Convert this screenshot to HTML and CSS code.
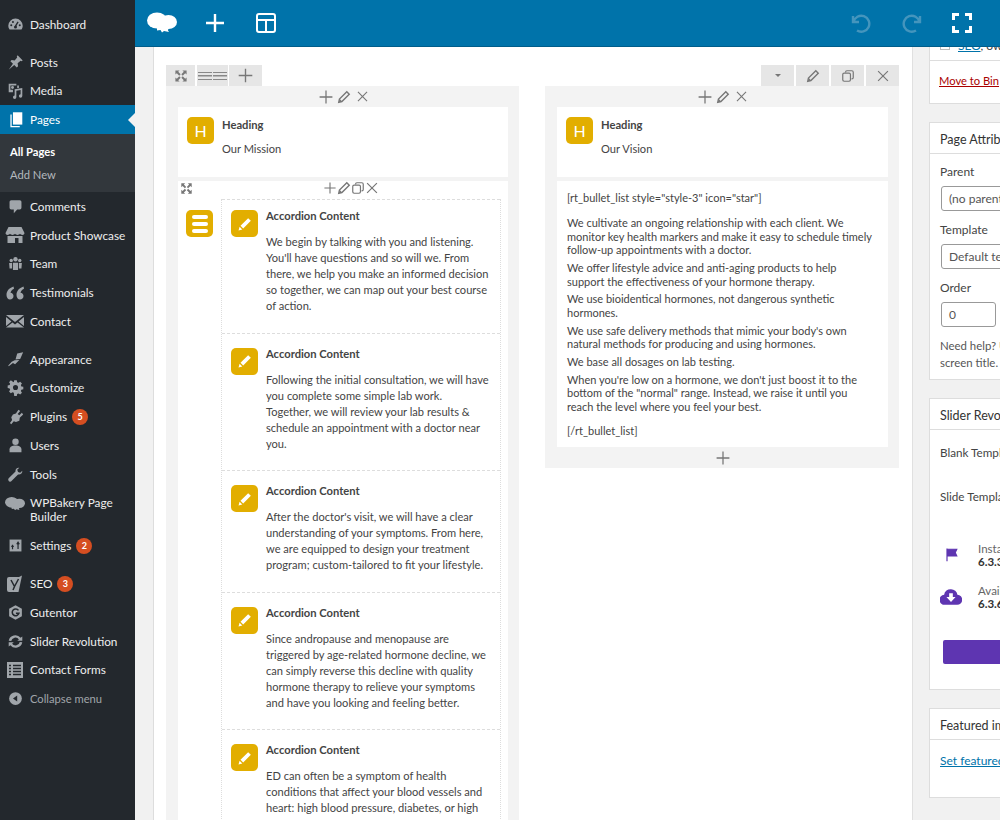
FILE: index.html
```html
<!DOCTYPE html>
<html lang="en">
<head>
    <meta charset="UTF-8">
    <title>Edit Page</title>
    <link rel="stylesheet" href="styles.css">
</head>
<body>
    <svg class="sprite" xmlns="http://www.w3.org/2000/svg">
        <symbol id="i-plus" viewBox="0 0 20 20"><path d="M10 2v16M2 10h16" fill="none" stroke="currentColor" stroke-width="1.6"/></symbol>
        <symbol id="i-x" viewBox="0 0 20 20"><path d="M3 3l14 14M17 3L3 17" fill="none" stroke="currentColor" stroke-width="1.7"/></symbol>
        <symbol id="i-pencil" viewBox="0 0 20 20"><path d="M14 2.500l3.500 3.500L7 16.500l-4.500 1 1-4.500z" fill="none" stroke="currentColor" stroke-width="2"/><path d="M3 17l1-4 3 3z" fill="currentColor"/></symbol>
        <symbol id="i-copy" viewBox="0 0 20 20"><rect x="2.500" y="6" width="11" height="11.500" rx="2" fill="none" stroke="currentColor" stroke-width="1.700"/><path d="M6.500 5V4.500a2 2 0 0 1 2-2h7a2 2 0 0 1 2 2V12a2 2 0 0 1-2 2H15" fill="none" stroke="currentColor" stroke-width="1.700"/></symbol>
        <symbol id="i-expand" viewBox="0 0 20 20"><path d="M2 2h6L6 4l3.500 3.500-2 2L4 6 2 8zM18 2v6l-2-2-3.500 3.500-2-2L14 4l-2-2zM2 18v-6l2 2 3.500-3.500 2 2L6 16l2 2zM18 18h-6l2-2-3.500-3.500 2-2L16 14l2-2z" fill="currentColor"/></symbol>
        <symbol id="i-edit" viewBox="0 0 20 20"><path d="M13.500 3.500l3 3-8.500 8.500-3-3zM4 13l3 3-4.200 1.200z" fill="currentColor"/></symbol>
        <symbol id="i-cloud" viewBox="0 0 30 22"><ellipse cx="10" cy="8.500" rx="10" ry="8" fill="currentColor"/><ellipse cx="21.500" cy="10" rx="8.500" ry="7" fill="currentColor"/><path d="M10 14h12l-1 4.500 1 1.500-5-1-2 1.500-1.500-2.500-3.500.5z" fill="currentColor"/></symbol>
    </svg>

    <nav class="sidebar">
        <ul class="menu">
            <li class="menu-item"><svg class="menu-icon" viewBox="0 0 20 20"><path d="M10 3a8.500 8.500 0 0 0-8.500 8.500c0 1.800.5 3.300 1.500 4.500h14c1-1.200 1.500-2.700 1.500-4.500A8.500 8.500 0 0 0 10 3z" fill="currentColor"/><path d="M10 12l3-5" stroke="#23282d" stroke-width="1.600"/><circle cx="5" cy="11" r="1.200" fill="#23282d"/><circle cx="7" cy="7" r="1.200" fill="#23282d"/><circle cx="15" cy="11" r="1.200" fill="#23282d"/><circle cx="10" cy="13" r="1.800" fill="#23282d"/></svg>Dashboard</li>
            <li class="menu-sep"></li>
            <li class="menu-item"><svg class="menu-icon" viewBox="0 0 20 20"><path d="M12.500 1.500l6 6-1.500 1-1-.5-3.500 3 .5 3.500-1.500 1.500-3-3L2 18.500l5-7-3-3L5.500 7l3.500.5 3-3.500-.5-1z" fill="currentColor"/></svg>Posts</li>
            <li class="menu-item"><svg class="menu-icon" viewBox="0 0 20 20"><path d="M2 2h9v2h3v3h-2V4H4v5h3v3H2z" fill="currentColor"/><circle cx="6.500" cy="6.500" r="1.700" fill="currentColor"/><path d="M9 8.500l9-1.500v9.500a2 2 0 1 1-2-2V9.500l-5 .8V18a2 2 0 1 1-2-2z" fill="currentColor"/></svg>Media</li>
            <li class="menu-item is-current"><svg class="menu-icon" viewBox="0 0 20 20"><path d="M7 1.500h11v14.500H7z" fill="currentColor"/><path d="M5.500 4H4v15h11v-1.500H5.500z" fill="currentColor"/></svg>Pages</li>
            <li class="submenu">
                <div class="submenu-item is-active">All Pages</div>
                <div class="submenu-item">Add New</div>
            </li>
            <li class="menu-item"><svg class="menu-icon" viewBox="0 0 20 20"><path d="M5 2.500h10a2 2 0 0 1 2 2v7a2 2 0 0 1-2 2h-3l-4 4.500v-4.500H5a2 2 0 0 1-2-2v-7a2 2 0 0 1 2-2z" fill="currentColor"/></svg>Comments</li>
            <li class="menu-item"><svg class="menu-icon wide" viewBox="0 0 20 20"><path d="M3.500 2h13L19.500 8c0 1.300-1 2-2.200 2-.9 0-1.800-.5-2.300-1.200-.5.7-1.500 1.200-2.500 1.200s-2-.5-2.500-1.200C9.500 9.500 8.500 10 7.500 10S5.500 9.500 5 8.800C4.500 9.500 3.600 10 2.700 10 1.500 10 .5 9.300.5 8z" fill="currentColor"/><path d="M2.500 11h15v7h-4v-5h-3.500v5H2.500z" fill="currentColor"/></svg>Product Showcase</li>
            <li class="menu-item"><svg class="menu-icon" viewBox="0 0 20 20"><circle cx="10" cy="5" r="2.600" fill="currentColor"/><circle cx="5" cy="6.500" r="2" fill="currentColor"/><circle cx="15" cy="6.500" r="2" fill="currentColor"/><path d="M7 9h6v8.500H7zM2.500 9.500h3.500v6.500H3zM14 9.500h3.500L17 16h-3z" fill="currentColor"/></svg>Team</li>
            <li class="menu-item"><svg class="menu-icon wide" viewBox="0 0 20 20"><path d="M8.500 3.500C4 5 1.500 8 1.500 12c0 2.500 1.500 4.500 3.500 4.500s3.500-1.500 3.500-3.500-1.300-3.300-3-3.300c.3-1.500 1.500-3 3.500-4zM18.500 3.500C14 5 11.500 8 11.500 12c0 2.500 1.500 4.500 3.500 4.500s3.500-1.500 3.500-3.500-1.300-3.300-3-3.300c.3-1.500 1.500-3 3.500-4z" fill="currentColor"/></svg>Testimonials</li>
            <li class="menu-item"><svg class="menu-icon wide" viewBox="0 0 20 20"><path d="M1 4h18L10 11zM1 6l5.500 4.500L1 15zM19 6v9l-5.500-4.500zM7.500 11.500L10 13.500l2.500-2 6.500 5H1z" fill="currentColor"/></svg>Contact</li>
            <li class="menu-sep"></li>
            <li class="menu-item"><svg class="menu-icon" viewBox="0 0 20 20"><path d="M12 3l7-1.500-3.500 8L10 10zM9 11l5.500-.5-5 5-2.500-1.500-5 4L1.500 17l4-4.500z" fill="currentColor"/></svg>Appearance</li>
            <li class="menu-item"><svg class="menu-icon" viewBox="0 0 20 20"><path d="M8.500 1.500h3l.5 2.300 1.500.6 2-1.300 2.100 2.100-1.300 2 .6 1.500 2.300.5v3l-2.300.5-.6 1.500 1.300 2-2.100 2.100-2-1.300-1.500.6-.5 2.300h-3L8 16.100l-1.500-.6-2 1.300-2.100-2.100 1.300-2-.6-1.500-2.300-.5v-3l2.300-.5.6-1.500-1.300-2 2.100-2.100 2 1.300L8 3.800zM10 7a3 3 0 1 0 0 6 3 3 0 0 0 0-6z" fill="currentColor"/></svg>Customize</li>
            <li class="menu-item"><svg class="menu-icon" viewBox="0 0 20 20"><path d="M13.500 2l2 1.500-3 3.500 2 1.500 3-3 1.500 2-4 4-.5 3.500-4 1.500-2.500-1-3 3.500-1.500-1.500 2.500-3.500-1-3 2-3.500 3.500-1z" fill="currentColor"/></svg>Plugins <span class="badge">5</span></li>
            <li class="menu-item"><svg class="menu-icon" viewBox="0 0 20 20"><circle cx="10" cy="5.500" r="3.800" fill="currentColor"/><path d="M10 10c-4 0-7 1.500-7 4.500V18h14v-3.500C17 11.500 14 10 10 10z" fill="currentColor"/></svg>Users</li>
            <li class="menu-item"><svg class="menu-icon" viewBox="0 0 20 20"><path d="M18 5.500c.3 2.500-2 5-5 4.500l-8 8c-1 1-2.500 0-3-.5-.5-.5-1-2 0-3l8-8c-.5-3 2-5 4.500-4.500l-2.500 2.500 1 2.500 2.500.8z" fill="currentColor"/></svg>Tools</li>
            <li class="menu-item is-double"><svg class="menu-icon wide" viewBox="0 0 30 22"><use href="#i-cloud"/></svg><span>WPBakery Page<br>Builder</span></li>
            <li class="menu-item"><svg class="menu-icon" viewBox="0 0 20 20"><path d="M3 3h14v14H3z" fill="currentColor"/><path d="M6.500 9v5.500M5 11h3M13 6v8M11.500 8.500L13 6l1.500 2.500" stroke="#23282d" stroke-width="1.400" fill="none"/></svg>Settings <span class="badge">2</span></li>
            <li class="menu-sep"></li>
            <li class="menu-item"><svg class="menu-icon wide" viewBox="0 0 20 20"><path d="M4 3h10l3-1.500L13.500 18H4a2 2 0 0 1-2-2V5a2 2 0 0 1 2-2z" fill="currentColor"/><path d="M6 6l3.500 6.500L8 16M13.500 5l-4 7.500" stroke="#23282d" stroke-width="1.500" fill="none"/></svg>SEO <span class="badge">3</span></li>
            <li class="menu-item"><svg class="menu-icon" viewBox="0 0 20 20"><path d="M10 1.500l7.500 4v9l-7.500 4-7.500-4v-9z" fill="currentColor"/><path d="M13.500 7.500A4 4 0 1 0 14 11h-3.500" stroke="#23282d" stroke-width="1.800" fill="none"/></svg>Gutentor</li>
            <li class="menu-item"><svg class="menu-icon" viewBox="0 0 20 20"><path d="M2 9l3 .5a5 5 0 0 1 9-2L12 9h6V4l-2 1.500A8 8 0 0 0 2 9zM18 11l-3-.5a5 5 0 0 1-9 2L8 11H2v5l2-1.500A8 8 0 0 0 18 11z" fill="currentColor"/></svg>Slider Revolution</li>
            <li class="menu-item"><svg class="menu-icon wide" viewBox="0 0 20 20"><path d="M2 2h16v16H2z" fill="currentColor"/><path d="M4 5.500h2M8 5.500h8M4 8.500h2M8 8.500h8M4 11.500h2M8 11.500h8M4 14.500h2M8 14.500h8" stroke="#23282d" stroke-width="1.300"/></svg>Contact Forms</li>
            <li class="menu-item is-collapse"><svg class="menu-icon" viewBox="0 0 20 20"><circle cx="10" cy="10" r="7.500" fill="currentColor"/><path d="M12 6.500v7L7 10z" fill="#23282d"/></svg>Collapse menu</li>
        </ul>
    </nav>

    <div class="main">
        <header class="topbar">
            <svg class="top-icon logo"><use href="#i-cloud"/></svg>
            <svg class="top-icon add" viewBox="0 0 20 20"><path d="M10 1v18M1 10h18" fill="none" stroke="currentColor" stroke-width="2.400"/></svg>
            <svg class="top-icon layout" viewBox="0 0 20 20"><path d="M3 1h14a2 2 0 0 1 2 2v14a2 2 0 0 1-2 2H3a2 2 0 0 1-2-2V3a2 2 0 0 1 2-2zM1 7h18M10 7v12" fill="none" stroke="currentColor" stroke-width="2"/></svg>
            <div class="top-right">
                <svg class="top-icon dim" viewBox="0 0 20 20"><path d="M2 3v6h6M2.500 9A8 8 0 1 1 6 17.500" fill="none" stroke="currentColor" stroke-width="2.400"/></svg>
                <svg class="top-icon dim" viewBox="0 0 20 20"><path d="M18 3v6h-6M17.500 9A8 8 0 1 0 14 17.500" fill="none" stroke="currentColor" stroke-width="2.400"/></svg>
                <svg class="top-icon" viewBox="0 0 20 20"><path d="M1.500 7V1.500H7M13 1.500h5.500V7M18.500 13v5.500H13M7 18.500H1.500V13" fill="none" stroke="currentColor" stroke-width="3"/></svg>
            </div>
        </header>

        <div class="content">
            <div class="gutter"></div>
            <section class="editor">
                <div class="col">
                    <div class="tabs">
                        <span class="tab tab-expand"><svg class="tab-icon small"><use href="#i-expand"/></svg></span>
                        <span class="tab tab-lines"><span class="lines"></span><span class="lines"></span></span>
                        <span class="tab tab-add"><svg class="tab-icon"><use href="#i-plus"/></svg></span>
                    </div>
                    <div class="col-body">
                        <div class="controls">
                            <svg class="ctl big"><use href="#i-plus"/></svg><svg class="ctl"><use href="#i-pencil"/></svg><svg class="ctl ctl-x"><use href="#i-x"/></svg>
                        </div>
                        <div class="card heading-card">
                            <span class="gold">H</span>
                            <div>
                                <h4>Heading</h4>
                                <p>Our Mission</p>
                            </div>
                        </div>
                        <div class="card accordion-card">
                            <div class="acc-tools">
                                <svg class="acc-expand"><use href="#i-expand"/></svg>
                                <div class="controls tight">
                                    <svg class="ctl"><use href="#i-plus"/></svg><svg class="ctl"><use href="#i-pencil"/></svg><svg class="ctl"><use href="#i-copy"/></svg><svg class="ctl"><use href="#i-x"/></svg>
                                </div>
                            </div>
                            <div class="acc-row">
                                <span class="gold"><span class="bars"><i></i><i></i><i></i></span></span>
                                <div class="acc-list">
                                    <article class="acc-item">
                                        <span class="gold"><svg class="edit-icon"><use href="#i-edit"/></svg></span>
                                        <div>
                                            <h4>Accordion Content</h4>
                                            <p>We begin by talking with you and listening.<br>You'll have questions and so will we. From<br>there, we help you make an informed decision<br>so together, we can map out your best course<br>of action.</p>
                                        </div>
                                    </article>
                                    <article class="acc-item">
                                        <span class="gold"><svg class="edit-icon"><use href="#i-edit"/></svg></span>
                                        <div>
                                            <h4>Accordion Content</h4>
                                            <p>Following the initial consultation, we will have<br>you complete some simple lab work.<br>Together, we will review your lab results &amp;<br>schedule an appointment with a doctor near<br>you.</p>
                                        </div>
                                    </article>
                                    <article class="acc-item">
                                        <span class="gold"><svg class="edit-icon"><use href="#i-edit"/></svg></span>
                                        <div>
                                            <h4>Accordion Content</h4>
                                            <p>After the doctor's visit, we will have a clear<br>understanding of your symptoms. From here,<br>we are equipped to design your treatment<br>program; custom-tailored to fit your lifestyle.</p>
                                        </div>
                                    </article>
                                    <article class="acc-item">
                                        <span class="gold"><svg class="edit-icon"><use href="#i-edit"/></svg></span>
                                        <div>
                                            <h4>Accordion Content</h4>
                                            <p>Since andropause and menopause are<br>triggered by age-related hormone decline, we<br>can simply reverse this decline with quality<br>hormone therapy to relieve your symptoms<br>and have you looking and feeling better.</p>
                                        </div>
                                    </article>
                                    <article class="acc-item">
                                        <span class="gold"><svg class="edit-icon"><use href="#i-edit"/></svg></span>
                                        <div>
                                            <h4>Accordion Content</h4>
                                            <p>ED can often be a symptom of health<br>conditions that affect your blood vessels and<br>heart: high blood pressure, diabetes, or high</p>
                                        </div>
                                    </article>
                                </div>
                            </div>
                        </div>
                    </div>
                </div>

                <div class="col">
                    <div class="tabs tabs-right">
                        <span class="tab"><span class="caret"></span></span>
                        <span class="tab"><svg class="tab-icon small"><use href="#i-pencil"/></svg></span>
                        <span class="tab"><svg class="tab-icon small"><use href="#i-copy"/></svg></span>
                        <span class="tab"><svg class="tab-icon small"><use href="#i-x"/></svg></span>
                    </div>
                    <div class="col-body col-short">
                        <div class="controls">
                            <svg class="ctl big"><use href="#i-plus"/></svg><svg class="ctl"><use href="#i-pencil"/></svg><svg class="ctl ctl-x"><use href="#i-x"/></svg>
                        </div>
                        <div class="card heading-card">
                            <span class="gold">H</span>
                            <div>
                                <h4>Heading</h4>
                                <p>Our Vision</p>
                            </div>
                        </div>
                        <div class="card text-card">
                            <p>[rt_bullet_list style="style-3" icon="star"]</p>
                            <p class="first">We cultivate an ongoing relationship with each client. We<br>monitor key health markers and make it easy to schedule timely<br>follow-up appointments with a doctor.</p>
                            <p>We offer lifestyle advice and anti-aging products to help<br>support the effectiveness of your hormone therapy.</p>
                            <p>We use bioidentical hormones, not dangerous synthetic<br>hormones.</p>
                            <p>We use safe delivery methods that mimic your body's own<br>natural methods for producing and using hormones.</p>
                            <p>We base all dosages on lab testing.</p>
                            <p>When you're low on a hormone, we don't just boost it to the<br>bottom of the "normal" range. Instead, we raise it until you<br>reach the level where you feel your best.</p>
                            <p class="last">[/rt_bullet_list]</p>
                        </div>
                        <div class="controls bottom"><svg class="ctl big"><use href="#i-plus"/></svg></div>
                    </div>
                </div>
            </section>

            <aside class="side">
                <div class="panel publish">
                    <div class="publish-top"><span class="check"></span><a class="link">SEO</a>, own</div>
                    <a class="bin">Move to Bin</a>
                </div>

                <div class="panel">
                    <h3>Page Attributes</h3>
                    <div class="panel-body attrs">
                        <label>Parent</label>
                        <div class="select">(no parent)</div>
                        <label>Template</label>
                        <div class="select">Default template</div>
                        <label>Order</label>
                        <div class="select order">0</div>
                        <p class="help">Need help? Use the Help tab above the<br>screen title.</p>
                    </div>
                </div>

                <div class="panel">
                    <h3>Slider Revolution</h3>
                    <div class="panel-body revo">
                        <p class="revo-line">Blank Template</p>
                        <p class="revo-line">Slide Template</p>
                        <div class="version">
                            <svg class="version-icon" viewBox="0 0 20 20"><path d="M4 2v17M4 3h13l-2 4.500 2 4.500H4" fill="currentColor" stroke="currentColor" stroke-width="1.600"/></svg>
                            <div>Installed Version<br><b>6.3.3</b></div>
                        </div>
                        <div class="version v2">
                            <svg class="version-icon wide" viewBox="0 0 24 20"><path d="M12 1.500a7 7 0 0 1 7 6 5.500 5.500 0 0 1-.5 11h-13a5.500 5.500 0 0 1-1-11 7 7 0 0 1 7.500-6z" fill="currentColor"/><path d="M10 6h4v4h3l-5 5.500L7 10h3z" fill="#fff"/></svg>
                            <div>Available Version<br><b>6.3.6</b></div>
                        </div>
                        <div class="revo-btn"></div>
                    </div>
                </div>

                <div class="panel">
                    <h3>Featured image</h3>
                    <div class="panel-body featured"><a class="link">Set featured image</a></div>
                </div>
            </aside>
        </div>
    </div>
</body>
</html>
```

FILE: styles.css
```css
* {
    box-sizing: border-box;
}
html, body {
    margin: 0;
    height: 820px;
    overflow: hidden;
}
body {
    display: flex;
    font-family: Lato, "Open Sans", sans-serif;
    font-size: 12px;
    color: #444;
    background: #f1f1f1;
}
h3, h4, p {
    margin: 0;
}
.sprite {
    display: none;
}

/* admin menu */
.sidebar {
    width: 135px;
    flex-shrink: 0;
    background: #23282d;
    color: #eee;
    font-size: 11.8px;
}
.menu {
    list-style: none;
    margin: 0;
    padding: 10px 0 0;
}
.menu-item {
    position: relative;
    display: flex;
    align-items: center;
    height: 28.75px;
    padding-left: 30px;
    white-space: nowrap;
}
.menu-item.is-double {
    height: 43px;
    align-items: flex-start;
    line-height: 14.5px;
    padding-top: 7px;
}
.menu-icon {
    position: absolute;
    left: 7px;
    top: 50%;
    width: 17px;
    height: 17px;
    margin-top: -8.5px;
    color: #a0a5aa;
}
.menu-icon.wide {
    left: 5px;
    width: 20px;
    height: 20px;
    margin-top: -10px;
}
.is-double .menu-icon {
    top: 15px;
}
.menu-sep {
    height: 9px;
}
.is-current {
    background: #0073aa;
    color: #fff;
}
.is-current .menu-icon {
    color: #fff;
}
.is-current::after {
    content: "";
    position: absolute;
    right: 0;
    top: 50%;
    margin-top: -7px;
    border: 7px solid transparent;
    border-left-width: 0;
    border-right-color: #f1f1f1;
}
.submenu {
    height: 58px;
    padding-top: 6px;
    background: #32373c;
}
.submenu-item {
    height: 23px;
    line-height: 23px;
    padding-left: 10px;
    font-size: 11.2px;
    color: #b4b9be;
}
.submenu-item.is-active {
    color: #fff;
    font-weight: 700;
}
.badge {
    display: inline-block;
    width: 16px;
    height: 16px;
    margin-left: 5px;
    border-radius: 50%;
    background: #d54e21;
    color: #fff;
    font-size: 9px;
    font-weight: 700;
    line-height: 16px;
    text-align: center;
}
.is-collapse {
    color: #a0a5aa;
    font-size: 11.2px;
}

/* main area */
.main {
    flex: 1;
    min-width: 0;
    display: flex;
    flex-direction: column;
}
.topbar {
    flex-shrink: 0;
    display: flex;
    align-items: center;
    height: 47px;
    padding-left: 12px;
    background: #0073aa;
    border-bottom: 1px solid #005d8a;
    color: #fff;
}
.top-icon {
    width: 20px;
    height: 20px;
}
.logo {
    width: 30px;
    height: 22px;
}
.add {
    margin-left: 28px;
}
.layout {
    margin-left: 31px;
}
.top-right {
    display: flex;
    gap: 30.5px;
    margin-left: auto;
    margin-right: 28px;
}
.dim {
    color: #4495bd;
}
.content {
    flex: 1;
    min-height: 0;
    display: flex;
    overflow: hidden;
}
.gutter {
    width: 19px;
    flex-shrink: 0;
    border-right: 1px solid #ddd;
}

/* page builder */
.editor {
    width: 759px;
    flex-shrink: 0;
    display: flex;
    gap: 26px;
    padding: 18px 13px 0 12px;
    background: #fff;
    border-right: 1px solid #e0e0e0;
    font-size: 11.1px;
}
.col {
    width: 353px;
    flex-shrink: 0;
}
.col:last-child {
    width: 354px;
}
.tabs {
    display: flex;
    gap: 2px;
    height: 21px;
}
.tabs-right {
    justify-content: flex-end;
}
.tab {
    display: flex;
    align-items: center;
    justify-content: center;
    width: 33px;
    background: #e6e6e6;
    color: #777;
}
.tab-expand {
    width: 29px;
}
.tab-lines {
    width: 31px;
    gap: 1px;
    margin-right: -1px;
}
.lines {
    width: 14px;
    height: 8px;
    border-top: 1.5px solid #888;
    border-bottom: 1.5px solid #888;
    background: linear-gradient(#888, #888) center / 100% 1.5px no-repeat;
}
.tab-icon {
    width: 17px;
    height: 17px;
}
.tab-icon.small {
    width: 14px;
    height: 14px;
}
.caret {
    border: 3px solid transparent;
    border-bottom-width: 0;
    border-top-color: #777;
}
.col-body {
    padding: 0 11px 0 12px;
    background: #f3f3f3;
    min-height: 760px;
}
.col-short {
    min-height: 0;
}
.controls {
    display: flex;
    align-items: center;
    justify-content: center;
    gap: 3px;
    height: 21px;
    color: #777;
}
.controls.tight {
    gap: 0;
}
.ctl {
    width: 14px;
    height: 14px;
}
.ctl-x {
    width: 13px;
    height: 13px;
    margin-left: 2px;
}
.ctl.big {
    width: 16px;
    height: 16px;
}
.card {
    background: #fff;
}
.heading-card {
    display: flex;
    gap: 8px;
    height: 70px;
    padding: 10px 9px;
    margin-bottom: 4px;
}
h4 {
    font-size: 11.2px;
    font-weight: 700;
    line-height: 16px;
    color: #444;
}
.heading-card p {
    margin-top: 8px;
    line-height: 16px;
}
.gold {
    flex-shrink: 0;
    display: flex;
    align-items: center;
    justify-content: center;
    width: 27px;
    height: 27px;
    border-radius: 5px;
    background: #e2ae00;
    color: #fff;
    font-size: 16px;
}
.bars {
    display: flex;
    flex-direction: column;
    gap: 3px;
}
.bars i {
    display: block;
    width: 16px;
    height: 4px;
    border-radius: 2px;
    background: #fff;
}
.edit-icon {
    width: 18px;
    height: 18px;
    color: #fff;
}
.accordion-card {
    padding: 0 7px 0 8px;
}
.acc-tools {
    position: relative;
    height: 18px;
}
.acc-tools .controls {
    height: 14px;
    padding-left: 14px;
}
.acc-expand {
    position: absolute;
    left: -6px;
    top: 1px;
    width: 13px;
    height: 13px;
    color: #777;
}
.acc-row {
    display: flex;
    gap: 8px;
}
.acc-row > .gold {
    margin-top: 11px;
}
.acc-list {
    flex: 1;
    border-left: 1px dotted #ddd;
    border-right: 1px dotted #ddd;
}
.acc-item {
    display: flex;
    gap: 8px;
    padding: 14px 9px 18.5px;
    border-top: 1px dashed #ddd;
}
.acc-item:first-child {
    padding-top: 10px;
}
.acc-item h4 {
    line-height: 12px;
}
.acc-item p {
    margin-top: 12px;
    line-height: 16px;
}

.text-card {
    height: 266px;
    padding: 10px 10px;
    font-size: 11px;
    line-height: 13.4px;
}
.text-card p {
    margin-bottom: 4.5px;
}
.text-card p.first {
    margin-top: 12px;
}
.text-card p.last {
    margin-top: 11px;
}

/* right side boxes */
.side {
    width: 280px;
    flex-shrink: 0;
    margin-left: 16px;
}
.panel {
    background: #fff;
    border: 1px solid #ddd;
    margin-bottom: 18px;
}
.panel h3 {
    height: 31px;
    padding-left: 10px;
    font-size: 12.5px;
    font-weight: 400;
    line-height: 33px;
    color: #333;
    border-bottom: 1px solid #ddd;
}
.panel-body {
    padding: 0 10px;
}
.publish {
    height: 67px;
    margin-top: -10px;
}
.publish-top {
    height: 23px;
    padding-left: 10px;
    border-bottom: 1px solid #ddd;
    line-height: 15px;
    white-space: nowrap;
}
.check {
    display: inline-block;
    width: 10px;
    height: 10px;
    margin-right: 8px;
    border: 1px solid #bbb;
}
.link {
    color: #0073aa;
    text-decoration: underline;
}
.bin {
    display: block;
    padding: 13px 0 0 9px;
    font-size: 11.2px;
    color: #a00;
    text-decoration: underline;
}
.attrs {
    height: 225px;
    padding-top: 10px;
}
.attrs label {
    display: block;
    line-height: 16px;
}
.select {
    height: 25px;
    margin: 5.5px 0 11.5px 1px;
    padding-left: 7px;
    border: 1px solid #999;
    border-radius: 3px;
    line-height: 23px;
    color: #555;
    white-space: nowrap;
}
.order {
    width: 55px;
    margin-bottom: 10px;
}
.help {
    font-size: 11.4px;
    line-height: 17px;
    color: #555;
    white-space: nowrap;
}
.revo {
    height: 259px;
    padding-top: 14px;
    font-size: 11.7px;
}
.revo-line {
    height: 44px;
    line-height: 16px;
    white-space: nowrap;
}
.version {
    display: flex;
    align-items: center;
    gap: 19px;
    height: 28px;
    margin-top: 8.5px;
    padding-left: 4px;
    font-size: 11.5px;
    line-height: 13px;
    color: #666;
    white-space: nowrap;
}
.v2 {
    gap: 16px;
    margin-top: 14.5px;
    padding-left: 0;
}
.version b {
    color: #333;
}
.version-icon {
    width: 15px;
    height: 17px;
    color: #5e35b1;
}
.version-icon.wide {
    width: 22px;
    height: 20px;
}
.revo-btn {
    height: 24px;
    margin: 29px 0 0 3px;
    border-radius: 2px;
    background: #5e35b1;
}
.featured {
    height: 57px;
    padding-top: 12px;
    line-height: 17px;
    color: #0073aa;
}
```
